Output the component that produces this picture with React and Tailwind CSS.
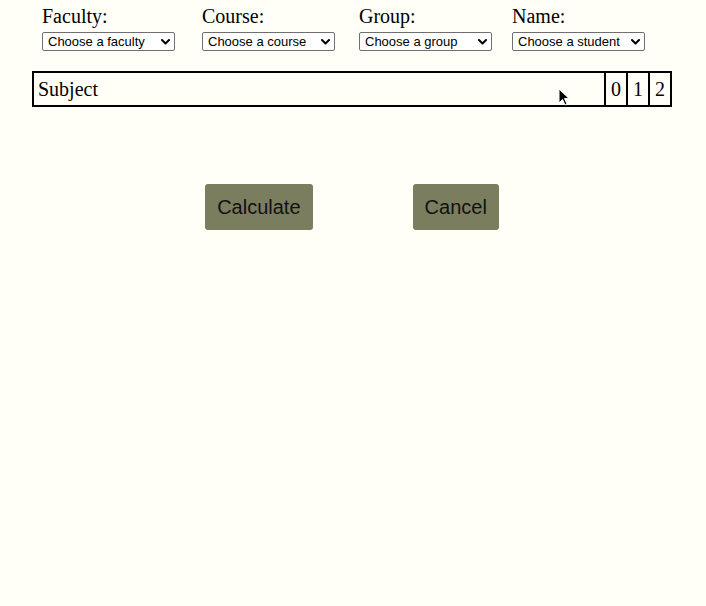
import React from "react";

function Chevron() {
  return (
    <svg width="9" height="6" viewBox="0 0 9 6" className="absolute right-[5px] top-[7px] pointer-events-none">
      <path d="M1 1 L4.5 4.5 L8 1" fill="none" stroke="#000" strokeWidth="2" strokeLinecap="round" strokeLinejoin="round" />
    </svg>
  );
}

function Field({ label, placeholder, className }) {
  return (
    <div className={"flex flex-col " + className}>
      <div className="text-[20px] leading-[22px] text-black" style={{ fontFamily: '"Liberation Serif", "Times New Roman", serif' }}>
        {label}
      </div>
      <div className="relative mt-[5px] w-[133px] h-[19px]">
        <select
          className="block appearance-none w-full h-[19px] bg-white border border-[#6f6f6f] rounded-[2px] pl-[5px] pr-[16px] py-0 text-[13px] leading-[17px] text-black outline-none"
          style={{ fontFamily: '"Liberation Sans", Arial, sans-serif' }}
          defaultValue=""
        >
          <option value="">{placeholder}</option>
        </select>
        <Chevron />
      </div>
    </div>
  );
}

export default function App() {
  const serif = { fontFamily: '"Liberation Serif", "Times New Roman", serif' };
  const sans = { fontFamily: '"Liberation Sans", Arial, sans-serif' };
  return (
    <div className="relative w-[706px] min-h-[606px] bg-[#fffff7]">
      <div className="flex pt-[5px]">
        <Field label="Faculty:" placeholder="Choose a faculty" className="ml-[42px]" />
        <Field label="Course:" placeholder="Choose a course" className="ml-[27px]" />
        <Field label="Group:" placeholder="Choose a group" className="ml-[24px]" />
        <Field label="Name:" placeholder="Choose a student" className="ml-[20px]" />
      </div>

      <table className="ml-[32px] mt-[20px] w-[640px] border-collapse border-2 border-black" style={serif}>
        <tbody>
          <tr className="text-[20px] leading-[24px] text-black">
            <td className="border-2 border-black px-[4px] py-[4px] w-full">Subject</td>
            <td className="border-2 border-black px-[5px] py-[4px] text-center">0</td>
            <td className="border-2 border-black px-[5px] py-[4px] text-center">1</td>
            <td className="border-2 border-black px-[5px] py-[4px] text-center">2</td>
          </tr>
        </tbody>
      </table>

      <div className="flex justify-center gap-[100px] mt-[77px] pr-[2px]">
        <button className="h-[46px] px-[12px] rounded-[3px] bg-[#7b7d5f] text-[20px] text-[#111]" style={sans}>
          Calculate
        </button>
        <button className="h-[46px] px-[12px] rounded-[3px] bg-[#7b7d5f] text-[20px] text-[#111]" style={sans}>
          Cancel
        </button>
      </div>

      <svg className="absolute left-[558px] top-[88px]" width="12" height="18" viewBox="0 0 12 18">
        <path d="M1 1 L1 15 L4.5 11.5 L7 17 L9 16 L6.5 10.5 L11 10.5 Z" fill="#000" stroke="#fff" strokeWidth="1" strokeLinejoin="round" />
      </svg>
    </div>
  );
}
